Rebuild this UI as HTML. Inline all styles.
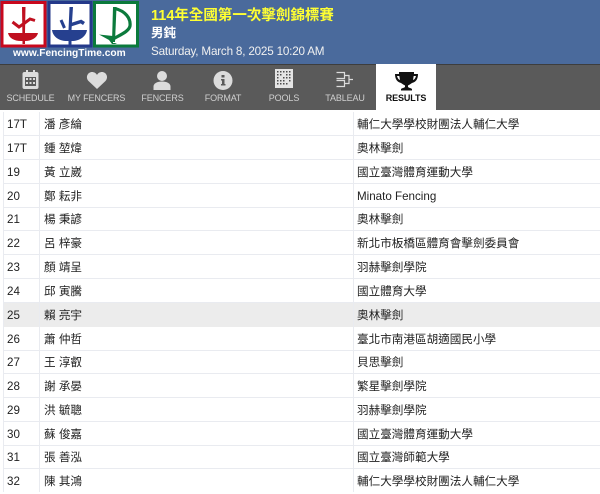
<!DOCTYPE html>
<html><head><meta charset="utf-8">
<style>
html,body{margin:0;padding:0;background:#fff}
body{width:600px;height:492px;overflow:hidden;position:relative;font-family:"Liberation Sans","Noto Sans CJK TC",sans-serif;color:#222}
.abs{position:absolute;white-space:nowrap}
#hd{position:absolute;left:0;top:0;width:600px;height:64px;background:#4a6a9c}
#nav{position:absolute;left:0;top:64px;width:600px;height:46px;background:#5a5a5a;border-top:1px solid #3d3d3d;box-sizing:border-box}
.tab{position:absolute;top:92px;font-size:9px;line-height:12px;color:#d0d0d0;text-align:center;transform:translateX(-50%);white-space:nowrap;letter-spacing:-.12px}
.r{position:absolute;left:3px;width:597px;height:24px;border-bottom:1.5px solid #e9ebf0;box-sizing:border-box;font-size:11.6px;line-height:24px;color:#222}
.r span{position:absolute;top:1px;white-space:nowrap}
.r .a{left:4px}.r .b{left:41px}.r .c{left:354px}
.v{position:absolute;top:112px;width:1px;height:380px;background:#e9ebf0}
</style></head><body>
<div id="hd"></div>

<svg class="abs" style="left:0;top:0" width="140" height="50" viewBox="0 0 140 50">
<rect x="2" y="2.500" width="43" height="43.500" fill="#fff" stroke="#c8081e" stroke-width="3"/>
<rect x="49" y="2.500" width="42" height="43.500" fill="#fff" stroke="#24398a" stroke-width="3"/>
<rect x="94.500" y="2.500" width="43" height="43.500" fill="#fff" stroke="#0b7a3c" stroke-width="3"/>
<!-- red -->
<path d="M8 33H38C37 38 31 41 25 41H21C14 41 9 38 8 33Z" fill="#c01020"/>
<path d="M22 7H25.500L25 33V44H22.500Z" fill="#c01020"/>
<path d="M12.500 22L19 27L24 23.500L30 19L35 20.500" fill="none" stroke="#c01020" stroke-width="3"/>
<!-- blue -->
<path d="M52 30H87C86 37 79 41 72 41H67C59 41 53 37 52 30Z" fill="#26408f"/>
<path d="M69.500 7H73L71.500 30V45H68.500V30Z" fill="#26408f"/>
<path d="M70 25L81 21.500L84 23.500" fill="none" stroke="#26408f" stroke-width="3.500"/>
<path d="M61 20L64.500 28" fill="none" stroke="#26408f" stroke-width="3"/>
<!-- green -->
<path d="M113 7H116.500L115 42H112Z" fill="#0b7a3c"/>
<path d="M115 8.500C125 11 131 18 130 26C129 31 122 34 114 38.500" fill="none" stroke="#0b7a3c" stroke-width="3.200"/>
<path d="M99 34.500L113 36V43H117L115 44H112L109 40Z" fill="#0b7a3c"/>
</svg>
<div class="abs" style="left:13px;top:47px;font-size:10.2px;line-height:13px;font-weight:bold;color:#fff">www.FencingTime.com</div>

<div class="abs" style="left:151px;top:8px;font-size:14.5px;line-height:17px;font-weight:bold;color:#ffff33">114年全國第一次擊劍錦標賽</div>
<div class="abs" style="left:151px;top:26px;font-size:12.5px;line-height:15px;font-weight:bold;color:#fff">男鈍</div>
<div class="abs" style="left:151px;top:44px;font-size:11.7px;line-height:16px;letter-spacing:-.2px;color:#f0f0f0">Saturday, March 8, 2025 10:20 AM</div>

<div id="nav"></div>
<div class="abs" style="left:376px;top:64px;width:60px;height:47px;background:#fff"></div>

<svg class="abs" style="left:0;top:64px" width="600" height="30" viewBox="0 0 600 30">
<!-- calendar -->
<rect x="22.500" y="8" width="16" height="17" rx="2" fill="#dcdcdc"/>
<rect x="26" y="6" width="2" height="4" fill="#dcdcdc"/><rect x="33" y="6" width="2" height="4" fill="#dcdcdc"/>
<rect x="25" y="13" width="11" height="9" fill="#5a5a5a"/>
<path d="M26 14h2v2h-2zM29.500 14h2v2h-2zM33 14h2v2h-2zM26 18h2v2h-2zM29.500 18h2v2h-2zM33 18h2v2h-2z" fill="#dcdcdc"/>
<!-- heart -->
<path d="M97 25L88.500 17C85 13 88 8 92 8C94 8 96 9 97 11C98 9 100 8 102 8C106 8 109 13 105.500 17Z" fill="#dcdcdc"/>
<!-- person -->
<circle cx="162" cy="12" r="5" fill="#dcdcdc"/>
<path d="M153.500 26V22.500C153.500 19.500 157 17.500 162 17.500C167 17.500 170.500 19.500 170.500 22.500V26Z" fill="#dcdcdc"/>
<!-- info -->
<circle cx="223" cy="16.500" r="9.500" fill="#dcdcdc"/>
<path d="M221.500 11h3v2.500h-3zM221 15h3.500v5h1v1.500h-4.500v-1.500h1v-3.500h-1z" fill="#5a5a5a"/>
<!-- pools -->
<rect x="275" y="5" width="18" height="19" fill="#e4e4e4"/>
<g fill="#4c4c4c"><path d="M277 7h1.500v1.500H277zM280 7h1.500v1.500H280zM283 7h1.500v1.500H283zM286 7h1.500v1.500H286zM289 7h1.500v1.500H289zM277 10h1.500v1.500H277zM280 10h1.500v1.500H280zM286 10h1.500v1.500H286zM289 10h1.500v1.500H289zM277 13h1.500v1.500H277zM283 13h1.500v1.500H283zM286 13h1.500v1.500H286zM289 13h1.500v1.500H289zM277 16h1.500v1.500H277zM280 16h1.500v1.500H280zM283 16h1.500v1.500H283zM289 16h1.500v1.500H289zM277 19h1.500v1.500H277zM280 19h1.500v1.500H280zM283 19h1.500v1.500H283zM286 19h1.500v1.500H286z"/></g>
<!-- tableau -->
<path d="M336.500 8.500H344.500V14.500H336.500M336.500 16.500H344.500V22.500H336.500M344.500 11.500H349V19.500H344.500M349 15.500H353" fill="none" stroke="#dcdcdc" stroke-width="1.200"/>
<!-- trophy -->
<path d="M399 8H414V10H418C418 15 416 18 412 19C410.500 20 409 21 408 21.500V23C409 24 411 24 412 25V26.500H401V25C402 24 404 24 405 23V21.500C404 21 402.500 20 401 19C397 18 395 15 395 10H399ZM397 12C397.500 14 398.500 15.500 400 16L399.300 12ZM416 12H413.700L413 16C414.500 15.500 415.500 14 416 12Z" fill="#111"/>
</svg>

<div class="tab" style="left:30.500px">SCHEDULE</div>
<div class="tab" style="left:96.500px">MY FENCERS</div>
<div class="tab" style="left:162.500px">FENCERS</div>
<div class="tab" style="left:223px">FORMAT</div>
<div class="tab" style="left:284px">POOLS</div>
<div class="tab" style="left:345px">TABLEAU</div>
<div class="tab" style="left:406px;color:#111;font-weight:bold;font-size:9px">RESULTS</div>

<div class="abs" style="left:3px;top:302.800px;width:597px;height:24px;background:#ececec"></div>

<div class="r" style="top:112px"><span class="a">17T</span><span class="b">潘 彥綸</span><span class="c">輔仁大學學校財團法人輔仁大學</span></div>
<div class="r" style="top:136px"><span class="a">17T</span><span class="b">鍾 堃煒</span><span class="c">奧林擊劍</span></div>
<div class="r" style="top:160px"><span class="a">19</span><span class="b">黃 立崴</span><span class="c">國立臺灣體育運動大學</span></div>
<div class="r" style="top:184px"><span class="a">20</span><span class="b">鄭 耘非</span><span class="c">Minato Fencing</span></div>
<div class="r" style="top:207px"><span class="a">21</span><span class="b">楊 秉諺</span><span class="c">奧林擊劍</span></div>
<div class="r" style="top:231px"><span class="a">22</span><span class="b">呂 梓豪</span><span class="c">新北市板橋區體育會擊劍委員會</span></div>
<div class="r" style="top:255px"><span class="a">23</span><span class="b">顏 靖呈</span><span class="c">羽赫擊劍學院</span></div>
<div class="r" style="top:279px"><span class="a">24</span><span class="b">邱 寅騰</span><span class="c">國立體育大學</span></div>
<div class="r" style="top:303px;border-bottom-color:transparent"><span class="a">25</span><span class="b">賴 亮宇</span><span class="c">奧林擊劍</span></div>
<div class="r" style="top:327px"><span class="a">26</span><span class="b">蕭 仲哲</span><span class="c">臺北市南港區胡適國民小學</span></div>
<div class="r" style="top:350px"><span class="a">27</span><span class="b">王 淳叡</span><span class="c">貝思擊劍</span></div>
<div class="r" style="top:374px"><span class="a">28</span><span class="b">謝 承晏</span><span class="c">繁星擊劍學院</span></div>
<div class="r" style="top:398px"><span class="a">29</span><span class="b">洪 毓聰</span><span class="c">羽赫擊劍學院</span></div>
<div class="r" style="top:422px"><span class="a">30</span><span class="b">蘇 俊嘉</span><span class="c">國立臺灣體育運動大學</span></div>
<div class="r" style="top:445px"><span class="a">31</span><span class="b">張 善泓</span><span class="c">國立臺灣師範大學</span></div>
<div class="r" style="top:469px;border-bottom:none"><span class="a">32</span><span class="b">陳 其鴻</span><span class="c">輔仁大學學校財團法人輔仁大學</span></div>

<div class="v" style="left:3px"></div>
<div class="v" style="left:39px"></div>
<div class="v" style="left:353px"></div>
</body></html>
